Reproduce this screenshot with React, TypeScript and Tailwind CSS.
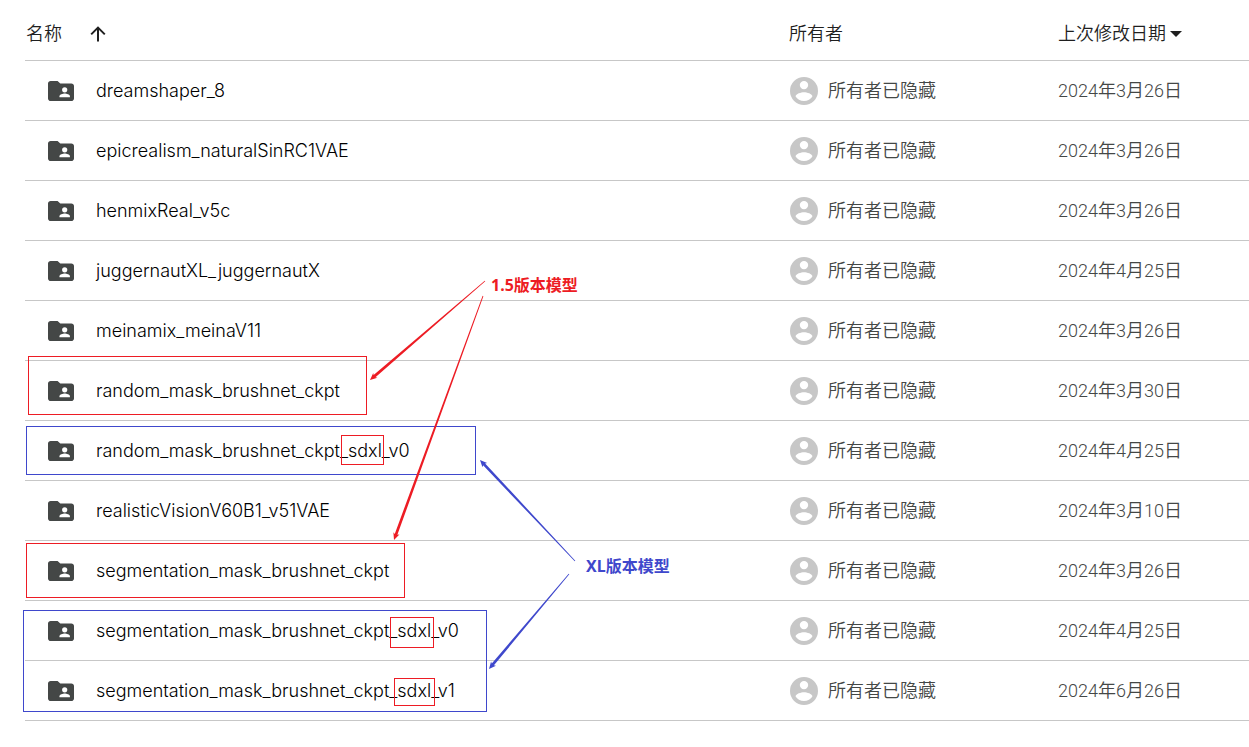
interface FileRow {
  name: string;
  date: string;
}

interface Frame {
  x: number;
  y: number;
  width: number;
  height: number;
  color: string;
}

interface Arrow {
  from: [number, number];
  to: [number, number];
  color: string;
}

const RED = "#ed1c24";
const BLUE = "#3f48cc";

const files: FileRow[] = [
  { name: "dreamshaper_8", date: "2024年3月26日" },
  { name: "epicrealism_naturalSinRC1VAE", date: "2024年3月26日" },
  { name: "henmixReal_v5c", date: "2024年3月26日" },
  { name: "juggernautXL_juggernautX", date: "2024年4月25日" },
  { name: "meinamix_meinaV11", date: "2024年3月26日" },
  { name: "random_mask_brushnet_ckpt", date: "2024年3月30日" },
  { name: "random_mask_brushnet_ckpt_sdxl_v0", date: "2024年4月25日" },
  { name: "realisticVisionV60B1_v51VAE", date: "2024年3月10日" },
  { name: "segmentation_mask_brushnet_ckpt", date: "2024年3月26日" },
  { name: "segmentation_mask_brushnet_ckpt_sdxl_v0", date: "2024年4月25日" },
  { name: "segmentation_mask_brushnet_ckpt_sdxl_v1", date: "2024年6月26日" },
];

const frames: Frame[] = [
  { x: 28, y: 356, width: 339, height: 59, color: RED },
  { x: 26, y: 426, width: 450, height: 49, color: BLUE },
  { x: 341, y: 435, width: 43, height: 30, color: RED },
  { x: 26, y: 543, width: 379, height: 55, color: RED },
  { x: 23, y: 610, width: 464, height: 102, color: BLUE },
  { x: 390, y: 617, width: 44, height: 31, color: RED },
  { x: 394, y: 678, width: 41, height: 28, color: RED },
];

const arrows: Arrow[] = [
  { from: [485, 281], to: [370, 380], color: RED },
  { from: [483, 296], to: [394, 540], color: RED },
  { from: [575, 561], to: [480, 460], color: BLUE },
  { from: [569, 574], to: [489, 669], color: BLUE },
];

/* Thin at the tail, thicker towards the head */
function arrowPoints({ from, to }: Arrow) {
  const dx = to[0] - from[0];
  const dy = to[1] - from[1];
  const length = Math.hypot(dx, dy);
  const ux = dx / length;
  const uy = dy / length;

  const at = (along: number, side: number) =>
    `${from[0] + ux * along - uy * side},${from[1] + uy * along + ux * side}`;

  return [
    at(0, 0.4),
    at(length - 6, 1.4),
    at(length - 7, 3.2),
    at(length, 0),
    at(length - 7, -3.2),
    at(length - 6, -1.4),
    at(0, -0.4),
  ].join(" ");
}

function SharedFolderIcon() {
  return (
    <svg viewBox="0 0 26 20" className="h-5 w-[26px] shrink-0" aria-hidden="true">
      <path
        fill="#444746"
        d="M2.6 0H9.6L12.3 2.4H23.4C24.8 2.4 26 3.6 26 5V17.4C26 18.8 24.8 20 23.4 20H2.6C1.2 20 0 18.8 0 17.4V2.6C0 1.2 1.2 0 2.6 0Z"
      />
      <circle cx="16.7" cy="8.8" r="2.6" fill="#fff" />
      <path fill="#fff" d="M11.5 16.3V15.2C11.5 13.4 15 12.5 16.7 12.5C18.4 12.5 21.9 13.4 21.9 15.2V16.3Z" />
    </svg>
  );
}

function OwnerIcon() {
  return (
    <svg viewBox="2 2 20 20" className="size-7 shrink-0" aria-hidden="true">
      <path
        fill="#c7c7c7"
        fillRule="evenodd"
        d="M12 2a10 10 0 1 0 0 20a10 10 0 0 0 0-20Zm0 2.8a3 3 0 1 1 0 6a3 3 0 0 1 0-6Zm0 14.4c-2.6 0-4.9-1.3-6-3.2c0-2 4-3.1 6-3.1s6 1.1 6 3.1c-1.1 1.9-3.4 3.2-6 3.2Z"
      />
    </svg>
  );
}

/* Frames, arrows and notes drawn over the list */
function Annotations() {
  return (
    <div className="pointer-events-none absolute inset-0 font-['Noto_Sans','Noto_Sans_CJK_SC',sans-serif]">
      <svg className="absolute top-0 left-0 h-full w-full" aria-hidden="true">
        {frames.map((frame) => (
          <rect
            key={`${frame.x}-${frame.y}`}
            x={frame.x + 0.5}
            y={frame.y + 0.5}
            width={frame.width - 1}
            height={frame.height - 1}
            fill="none"
            stroke={frame.color}
          />
        ))}
        {arrows.map((arrow) => (
          <polygon key={arrow.to.join("-")} points={arrowPoints(arrow)} fill={arrow.color} />
        ))}
      </svg>
      <span className="absolute top-[273px] left-[491px] text-base leading-6 font-bold whitespace-nowrap text-[#ed1c24]">
        1.5版本模型
      </span>
      <span className="absolute top-[554px] left-[586px] text-base leading-6 font-bold whitespace-nowrap text-[#3f48cc]">
        XL版本模型
      </span>
    </div>
  );
}

export default function App() {
  return (
    <main className="relative min-h-screen overflow-hidden bg-white pl-[25px] font-['Roboto','Noto_Sans_CJK_SC',sans-serif] text-lg text-[#1f1f1f]">
      <table className="w-full table-fixed border-separate border-spacing-0 text-left">
        <colgroup>
          <col />
          <col className="w-[269px]" />
          <col className="w-[191px]" />
        </colgroup>

        <thead>
          <tr className="h-[61px] *:border-b *:border-[#c7c7c7] *:pt-2 *:font-[350]">
            <th>
              <div className="flex items-center gap-7 pl-px">
                名称
                <button type="button" aria-label="升序" className="cursor-pointer">
                  <svg viewBox="0 0 16 16" className="size-4" fill="none" stroke="#1f1f1f" strokeWidth="2" aria-hidden="true">
                    <path d="M8 15.5V1.8M1.2 8.4L8 1.6L14.8 8.4" />
                  </svg>
                </button>
              </div>
            </th>
            <th>所有者</th>
            <th>
              <button type="button" className="flex cursor-pointer items-center gap-1">
                上次修改日期
                <svg viewBox="0 0 12 6" className="h-1.5 w-3" aria-hidden="true">
                  <path d="M0 0H12L6 6Z" fill="#1f1f1f" />
                </svg>
              </button>
            </th>
          </tr>
        </thead>

        <tbody>
          {files.map((file) => (
            <tr key={file.name} className="h-[60px] *:border-b *:border-[#c7c7c7]">
              <td className="pl-[23px]">
                <div className="flex items-center gap-[22px]">
                  <SharedFolderIcon />
                  <span className="font-['Inter',sans-serif] font-light text-black">{file.name}</span>
                </div>
              </td>
              <td className="font-[350] text-[#444746]">
                <div className="flex items-center gap-2.5 pl-px">
                  <OwnerIcon />
                  <span>所有者已隐藏</span>
                </div>
              </td>
              <td className="font-[350] text-[#444746]">{file.date}</td>
            </tr>
          ))}
        </tbody>
      </table>

      <Annotations />
    </main>
  );
}
